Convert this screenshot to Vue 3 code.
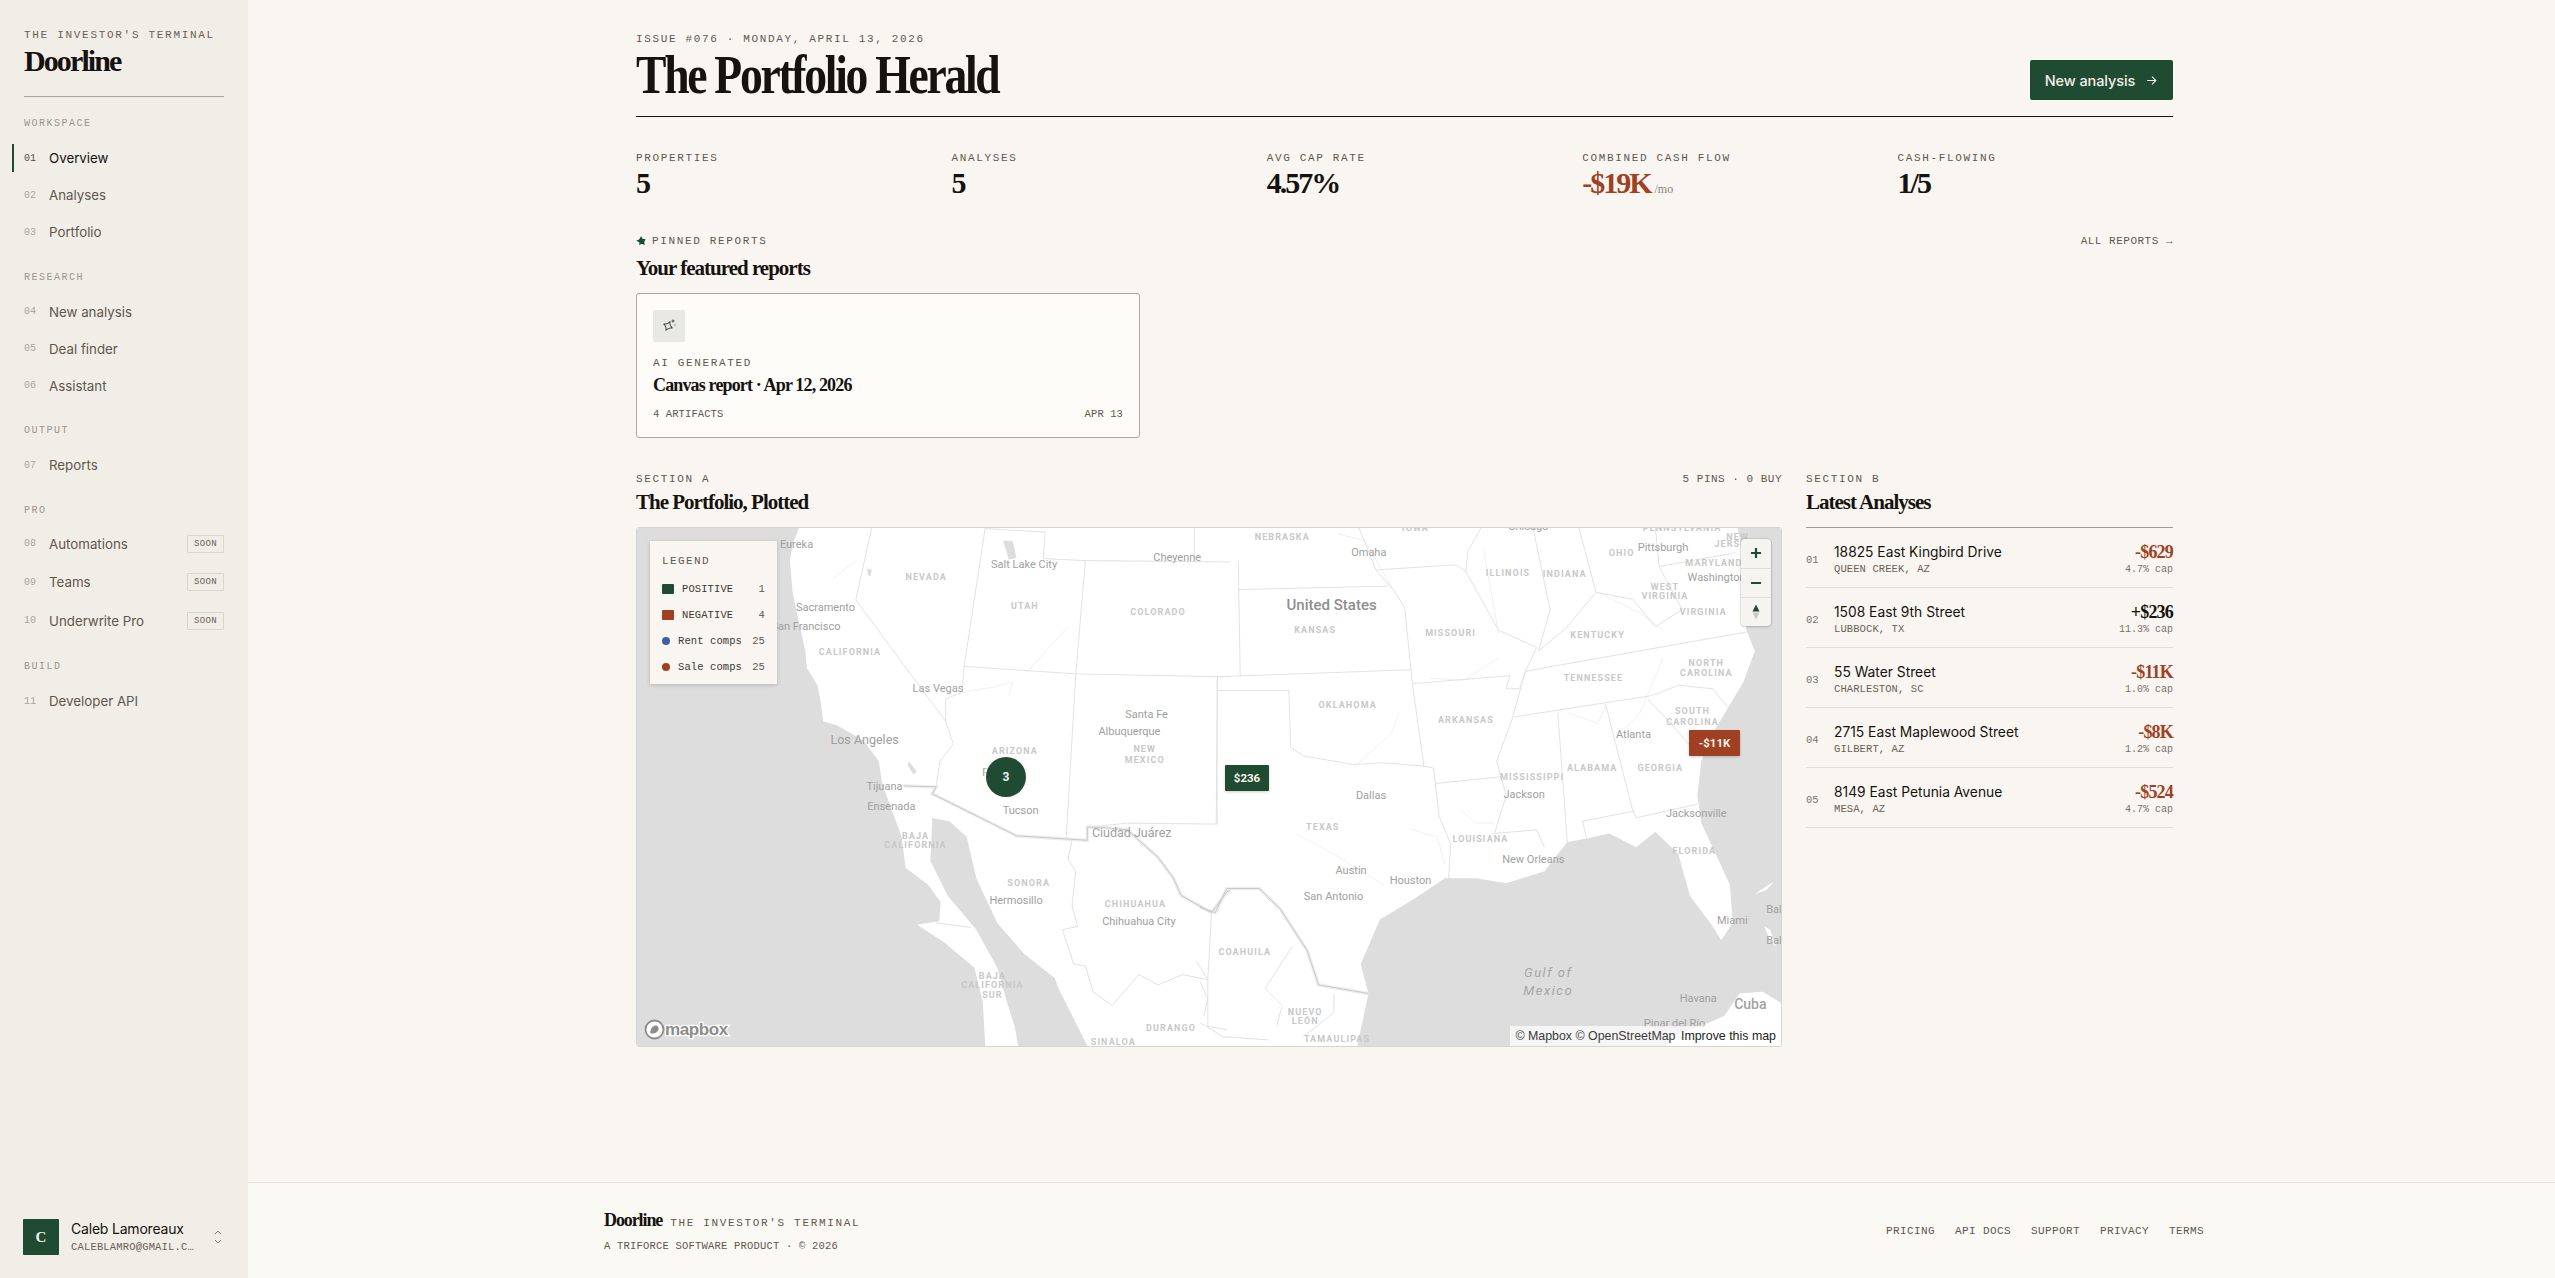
<template>
  <div class="app-shell">
    <!-- Sidebar -->
    <aside class="sidebar">
      <div class="brand">
        <div class="brand-tag">THE INVESTOR'S TERMINAL</div>
        <div class="brand-name">Doorline</div>
      </div>

      <nav>
        <div v-for="group in navGroups" :key="group.title" class="nav-group">
          <div class="nav-title">{{ group.title }}</div>
          <div
            v-for="item in group.items"
            :key="item.num"
            class="nav-row"
            :class="{ active: item.active, 'has-badge': item.soon }"
          >
            <span class="nav-num">{{ item.num }}</span>
            <span class="nav-label">{{ item.label }}</span>
            <span v-if="item.soon" class="soon">SOON</span>
          </div>
        </div>
      </nav>

      <div class="user">
        <div class="avatar">C</div>
        <div class="user-info">
          <div class="user-name">Caleb Lamoreaux</div>
          <div class="user-mail">CALEBLAMRO@GMAIL.C…</div>
        </div>
        <svg class="chevrons" width="12" height="16" viewBox="0 0 12 16" fill="none" stroke="#77716a" stroke-width="1">
          <path d="M3 5l3-3 3 3M3 11l3 3 3-3" />
        </svg>
      </div>
    </aside>

    <div class="main-col">
      <main class="main">
        <div class="content">
          <!-- Masthead -->
          <header class="masthead">
            <div>
              <div class="label">ISSUE #076 · MONDAY, APRIL 13, 2026</div>
              <h1>The Portfolio Herald</h1>
            </div>
            <button class="new-btn">
              New analysis
              <svg width="13" height="13" viewBox="0 0 24 24" fill="none" stroke="#f3efe6" stroke-width="2">
                <path d="M4 12h16M13 5l7 7-7 7" />
              </svg>
            </button>
          </header>

          <!-- Stats -->
          <section class="stats">
            <div v-for="stat in stats" :key="stat.label">
              <div class="label">{{ stat.label }}</div>
              <div class="stat-value" :class="{ neg: stat.neg }">
                {{ stat.value }}<span v-if="stat.unit" class="stat-unit">/mo</span>
              </div>
            </div>
          </section>

          <!-- Pinned reports -->
          <section class="pinned">
            <div class="section-head">
              <div>
                <div class="label pin-label">
                  <svg width="10" height="10" viewBox="0 0 10 10">
                    <path d="M5 .3l1.500 2.400 3.200.6-1.400 2.500.3 3.300-3.100-1.400-2.200 1.500.1-2.800L.3 4.400l2.800-1z" fill="#204b33" />
                  </svg>
                  PINNED REPORTS
                </div>
                <h2>Your featured reports</h2>
              </div>
              <div class="all-link">ALL REPORTS →</div>
            </div>
            <div class="report-card">
              <div class="report-icon">
                <svg width="16" height="16" viewBox="0 0 16 16" fill="none" stroke="#4c4a45" stroke-width="1">
                  <path d="M7 3Q7.900 7.100 12 8 7.900 8.900 7 13 6.100 8.900 2 8 6.100 7.100 7 3Z" transform="rotate(25 7 8)" />
                  <path d="M12 1.500v3M10.500 3h3" />
                  <path d="M14 6.500v1" />
                </svg>
              </div>
              <div class="label report-kind">AI GENERATED</div>
              <div class="report-title">Canvas report · Apr 12, 2026</div>
              <div class="report-foot">
                <span>4 ARTIFACTS</span>
                <span>APR 13</span>
              </div>
            </div>
          </section>

          <section class="split">
            <!-- Map -->
            <div>
              <div class="section-head">
                <div>
                  <div class="label">SECTION A</div>
                  <h2>The Portfolio, Plotted</h2>
                </div>
                <div class="pins-note">5 PINS · 0 BUY</div>
              </div>
              <div class="map">
                <svg class="map-canvas" viewBox="0 0 1146 519" width="1146" height="519">
                  <rect width="1146" height="519" fill="#fff" />
                  <path v-for="(d, i) in water" :key="'w' + i" :d="d" fill="#dddddd" />
                  <path v-for="(d, i) in islands" :key="'is' + i" :d="d" fill="#fff" />
                  <path v-for="(d, i) in faintLines" :key="'f' + i" :d="d" fill="none" stroke="#f0f0f0" stroke-width="1" />
                  <path v-for="(d, i) in stateLines" :key="'s' + i" :d="d" fill="none" stroke="#e2e2e2" stroke-width="1" />
                  <path v-for="(d, i) in border" :key="'ba' + i" :d="d" fill="none" stroke="#eeeeee" stroke-width="3.5" />
                  <path v-for="(d, i) in border" :key="'bb' + i" :d="d" fill="none" stroke="#c8c8c8" stroke-width="1" />
                  <text
                    v-for="(l, i) in mapLabels"
                    :key="'l' + i"
                    :x="l.x"
                    :y="l.y"
                    :class="'ml-' + l.kind"
                    text-anchor="middle"
                    dominant-baseline="central"
                  >{{ l.text }}</text>
                </svg>

                <div class="legend">
                  <div class="legend-title">LEGEND</div>
                  <div v-for="row in legend" :key="row.label" class="legend-row" :class="{ upper: row.square }">
                    <span :class="row.square ? 'swatch' : 'dot'" :style="{ background: row.color }"></span>
                    <span class="legend-label">{{ row.label }}</span>
                    <span class="legend-count">{{ row.count }}</span>
                  </div>
                </div>

                <div class="cluster">3</div>
                <div class="price pos">$236</div>
                <div class="price neg">-$11K</div>

                <div class="zoom-ctrl">
                  <button>
                    <svg width="14" height="14" viewBox="0 0 14 14"><path d="M7 2v10M2 7h10" stroke="#204b33" stroke-width="2.2" /></svg>
                  </button>
                  <button>
                    <svg width="14" height="14" viewBox="0 0 14 14"><path d="M2 7h10" stroke="#204b33" stroke-width="2.2" /></svg>
                  </button>
                  <button>
                    <svg width="14" height="18" viewBox="0 0 14 18">
                      <path d="M7 1.500l3.500 7h-7z" fill="#204b33" />
                      <path d="M7 16.500l3.500-7h-7z" fill="#c9c9c5" />
                    </svg>
                  </button>
                </div>

                <div class="mapbox-logo">
                  <svg width="21" height="21" viewBox="0 0 21 21">
                    <circle cx="10.5" cy="10.5" r="9" fill="#fff" stroke="#8c8c8c" stroke-width="1.8" />
                    <path d="M6.500 14.500c-.5-4 1.500-7.500 5-8 2.500 0 3.500 2 3 4-.5 2.500-3.500 4.500-8 4z" fill="#8c8c8c" />
                  </svg>
                  <svg width="66" height="21" viewBox="0 0 66 21">
                    <text x="0" y="16" class="mapbox-word">mapbox</text>
                  </svg>
                </div>
                <div class="attribution">
                  © Mapbox © OpenStreetMap <strong>Improve this map</strong>
                </div>
              </div>
            </div>

            <!-- Latest analyses -->
            <div>
              <div class="label">SECTION B</div>
              <h2>Latest Analyses</h2>
              <div class="analyses">
                <div v-for="row in analyses" :key="row.num" class="analysis">
                  <span class="analysis-num">{{ row.num }}</span>
                  <div class="analysis-main">
                    <div class="analysis-name">{{ row.name }}</div>
                    <div class="analysis-city">{{ row.city }}</div>
                  </div>
                  <div class="analysis-side">
                    <div class="analysis-value" :class="{ neg: row.neg }">{{ row.value }}</div>
                    <div class="analysis-cap">{{ row.cap }}</div>
                  </div>
                </div>
              </div>
            </div>
          </section>
        </div>
      </main>

      <!-- Footer -->
      <footer class="footer">
        <div class="footer-inner">
          <div>
            <div class="footer-brand">
              <span class="footer-name">Doorline</span>
              <span class="footer-tag">THE INVESTOR'S TERMINAL</span>
            </div>
            <div class="footer-sub">A TRIFORCE SOFTWARE PRODUCT · © 2026</div>
          </div>
          <div class="footer-links">
            <span v-for="link in footerLinks" :key="link">{{ link }}</span>
          </div>
        </div>
      </footer>
    </div>
  </div>
</template>

<script setup>
const navGroups = [
  { title: 'WORKSPACE', items: [
    { num: '01', label: 'Overview', active: true },
    { num: '02', label: 'Analyses' },
    { num: '03', label: 'Portfolio' },
  ] },
  { title: 'RESEARCH', items: [
    { num: '04', label: 'New analysis' },
    { num: '05', label: 'Deal finder' },
    { num: '06', label: 'Assistant' },
  ] },
  { title: 'OUTPUT', items: [{ num: '07', label: 'Reports' }] },
  { title: 'PRO', items: [
    { num: '08', label: 'Automations', soon: true },
    { num: '09', label: 'Teams', soon: true },
    { num: '10', label: 'Underwrite Pro', soon: true },
  ] },
  { title: 'BUILD', items: [{ num: '11', label: 'Developer API' }] },
];

const stats = [
  { label: 'PROPERTIES', value: '5' },
  { label: 'ANALYSES', value: '5' },
  { label: 'AVG CAP RATE', value: '4.57%' },
  { label: 'COMBINED CASH FLOW', value: '-$19K', neg: true, unit: true },
  { label: 'CASH-FLOWING', value: '1/5' },
];

const legend = [
  { label: 'POSITIVE', count: 1, color: '#204b33', square: true },
  { label: 'NEGATIVE', count: 4, color: '#9f4023', square: true },
  { label: 'Rent comps', count: 25, color: '#3f5fa3' },
  { label: 'Sale comps', count: 25, color: '#9f4023' },
];

const analyses = [
  { num: '01', name: '18825 East Kingbird Drive', city: 'QUEEN CREEK, AZ', value: '-$629', cap: '4.7% cap', neg: true },
  { num: '02', name: '1508 East 9th Street', city: 'LUBBOCK, TX', value: '+$236', cap: '11.3% cap' },
  { num: '03', name: '55 Water Street', city: 'CHARLESTON, SC', value: '-$11K', cap: '1.0% cap', neg: true },
  { num: '04', name: '2715 East Maplewood Street', city: 'GILBERT, AZ', value: '-$8K', cap: '1.2% cap', neg: true },
  { num: '05', name: '8149 East Petunia Avenue', city: 'MESA, AZ', value: '-$524', cap: '4.7% cap', neg: true },
];

const footerLinks = ['PRICING', 'API DOCS', 'SUPPORT', 'PRIVACY', 'TERMS'];

// Map drawing: points were read off two reference crops, left one starts at x=630, right one at x=1200
const SX = 1568 / 600;
const SY = 1568 / 540;
const toX = (side, x) => +((side === 'L' ? 630 : 1200) + x / SX - 636).toFixed(1);
const toY = (y) => +(520 + y / SY - 527).toFixed(1);

const line = (side, pts, close) => {
  let d = '';
  for (let i = 0; i < pts.length; i += 2) {
    d += (i ? 'L' : 'M') + toX(side, pts[i]) + ' ' + toY(pts[i + 1]);
  }
  return close ? d + 'Z' : d;
};

const water = [
  line('L', [-20, 0, 450, 0, 425, 70, 418, 120, 425, 210, 442, 300, 458, 380, 462, 430, 490, 480, 497, 520, 505, 585, 540, 595, 610, 640, 650, 700, 660, 770, 680, 830, 710, 920, 720, 1010, 780, 1060, 812, 1110, 808, 1165, 750, 1175, 820, 1225, 900, 1300, 922, 1400, 930, 1560, -20, 1560], true),
  line('L', [790, 865, 835, 875, 880, 920, 905, 1040, 960, 1170, 1030, 1260, 1110, 1330, 1120, 1360, 1210, 1560, 1020, 1560, 1005, 1470, 985, 1400, 960, 1300, 905, 1190, 830, 1090, 785, 990], true),
  line('R', [1400, 0, 1420, 100, 1420, 200, 1428, 320, 1450, 380, 1420, 470, 1380, 545, 1345, 610, 1310, 700, 1300, 800, 1310, 880, 1385, 1060, 1392, 1170, 1362, 1220, 1340, 1180, 1280, 1090, 1250, 970, 1190, 905, 1140, 950, 1070, 910, 1010, 925, 960, 935, 900, 1020, 800, 1055, 720, 1040, 640, 1040, 560, 1100, 470, 1160, 420, 1290, 440, 1375, 405, 1560, 1600, 1560, 1600, 0], true),
  line('L', [975, 60, 1000, 60, 1010, 110, 990, 115], true),
  line('L', [620, 140, 632, 145, 628, 165, 622, 160], true),
  line('L', [728, 700, 750, 730, 740, 738, 726, 712], true),
];

const islands = [
  line('R', [1190, 1560, 1250, 1490, 1330, 1460, 1370, 1440, 1410, 1375, 1470, 1370, 1530, 1410, 1530, 1560], true),
  line('R', [1475, 1180, 1490, 1220, 1505, 1240, 1490, 1190], true),
  line('R', [1450, 1085, 1500, 1050, 1480, 1075], true),
];

const stateLines = [
  line('L', [632, 22, 590, 232, 825, 585, 845, 650, 810, 700, 800, 775]),
  line('L', [928, 25, 873, 425, 868, 500, 825, 520, 825, 585]),
  line('L', [873, 425, 1165, 447, 1535, 455, 1568, 455]),
  line('L', [928, 25, 1085, 35, 1080, 112, 1190, 118, 1165, 447, 1140, 925]),
  line('L', [1190, 118, 1568, 122]),
  line('L', [1475, 22, 1475, 120]),
  line('L', [1535, 455, 1532, 883, 1300, 880, 1195, 892]),
  line('L', [1155, 930, 1145, 985, 1165, 1020, 1155, 1120, 1170, 1180, 1130, 1190, 1160, 1290, 1190, 1295, 1210, 1370, 1260, 1410, 1330, 1320, 1380, 1350, 1445, 1320, 1510, 1335, 1520, 1140]),
  line('L', [800, 1170, 890, 1183]),
  line('L', [1480, 1280, 1510, 1335, 1510, 1470, 1560, 1480]),
  line('R', [100, 120, 105, 452]),
  line('R', [100, 202, 490, 192]),
  line('R', [45, 455, 550, 435]),
  line('R', [45, 455, 45, 885]),
  line('R', [45, 495, 232, 495, 237, 660, 270, 685, 400, 710, 480, 705, 585, 715, 610, 720, 625, 860, 655, 940, 650, 1040]),
  line('R', [415, 22, 460, 145, 510, 210, 535, 255, 555, 475, 585, 715]),
  line('R', [555, 475, 810, 452, 800, 490, 835, 490, 850, 440]),
  line('R', [850, 440, 920, 425, 1430, 325]),
  line('R', [615, 765, 790, 745]),
  line('R', [850, 440, 815, 580, 775, 700, 800, 800, 770, 910, 880, 900, 900, 950]),
  line('R', [820, 572, 1180, 510, 1250, 480, 1340, 490, 1380, 545]),
  line('R', [935, 560, 960, 935]),
  line('R', [1060, 535, 1130, 840, 1140, 865, 1300, 825]),
  line('R', [1000, 875, 1135, 845]),
  line('R', [1000, 875, 1010, 925]),
  line('R', [1170, 520, 1230, 590, 1300, 680]),
  line('R', [460, 145, 670, 130, 695, 150, 700, 90, 735, 22]),
  line('R', [695, 150, 780, 320, 880, 370, 850, 440]),
  line('R', [870, 22, 915, 260, 885, 380]),
  line('R', [990, 22, 1035, 210]),
  line('R', [885, 380, 960, 310, 1035, 210, 1130, 230, 1190, 310, 1260, 260, 1200, 135]),
  line('R', [1190, 22, 1200, 135, 1400, 95]),
  line('R', [0, 1460, 60, 1500, 180, 1510]),
  line('R', [0, 1340, 20, 1390, 10, 1440]),
  line('R', [240, 1240, 170, 1360, 215, 1410, 200, 1470]),
  line('R', [350, 1375, 350, 1430, 270, 1500]),
];

const faintLines = [
  line('L', [1040, 440, 1095, 370, 1145, 310]),
  line('L', [870, 500, 950, 485, 1000, 470, 990, 510]),
  line('L', [530, 170, 590, 120]),
  line('R', [600, 460, 690, 465, 780, 400]),
  line('R', [680, 840, 720, 880, 770, 880]),
  line('R', [555, 900, 620, 920, 640, 1000]),
  line('R', [250, 910, 350, 970, 480, 1060]),
  line('R', [400, 720, 500, 620, 520, 560]),
  line('R', [1080, 640, 1150, 560, 1210, 400]),
  line('R', [960, 560, 1040, 590, 1060, 540]),
  line('R', [740, 80, 780, 330]),
  line('R', [1040, 210, 1150, 270, 1210, 320]),
  line('R', [360, 40, 430, 60, 520, 230]),
];

// Mexico / US border is drawn with a soft halo, as the map style does
const border = [
  line('L', [715, 772, 800, 775, 790, 795, 1010, 917, 1195, 930, 1195, 892, 1230, 892, 1300, 900, 1380, 980, 1420, 1040, 1440, 1090, 1520, 1140, 1560, 1080, 1568, 1075]),
  line('R', [0, 1125, 40, 1140, 70, 1070, 155, 1070, 210, 1130, 280, 1250, 310, 1350, 440, 1375]),
];

const labelRows = [
  ['L', 'Eureka', 435, 70, 'c'], ['L', 'NEVADA', 774, 165, 's'], ['L', 'Salt Lake City', 1030, 128, 'c'],
  ['L', 'Cheyenne', 1430, 110, 'c'], ['L', 'UTAH', 1032, 250, 's'], ['L', 'COLORADO', 1380, 268, 's'],
  ['L', 'Sacramento', 511, 254, 'c'], ['L', 'San Francisco', 460, 308, 'c'], ['L', 'CALIFORNIA', 575, 383, 's'],
  ['L', 'Las Vegas', 805, 488, 'c'], ['L', 'Santa Fe', 1350, 564, 'c'], ['L', 'Albuquerque', 1305, 614, 'c'],
  ['L', 'NEW', 1345, 665, 's'], ['L', 'MEXICO', 1345, 696, 's'], ['L', 'ARIZONA', 1006, 670, 's'],
  ['L', 'Los Angeles', 613, 638, 'b'], ['L', 'Phoenix', 972, 733, 'c'], ['L', 'Tijuana', 665, 773, 'c'],
  ['L', 'Ensenada', 683, 832, 'c'], ['L', 'Tucson', 1021, 843, 'c'], ['L', 'Ciudad Juárez', 1311, 906, 'b'],
  ['L', 'BAJA', 746, 917, 's'], ['L', 'CALIFORNIA', 746, 945, 's'], ['L', 'SONORA', 1042, 1054, 's'],
  ['L', 'Hermosillo', 1009, 1106, 'c'], ['L', 'CHIHUAHUA', 1321, 1114, 's'], ['L', 'Chihuahua City', 1330, 1166, 'c'],
  ['L', 'BAJA', 947, 1323, 's'], ['L', 'CALIFORNIA', 947, 1351, 's'], ['L', 'SUR', 947, 1379, 's'],
  ['L', 'DURANGO', 1414, 1476, 's'], ['L', 'SINALOA', 1263, 1515, 's'],
  ['R', 'NEBRASKA', 215, 50, 's'], ['R', 'IOWA', 563, 22, 's'], ['R', 'Chicago', 858, 18, 'c'],
  ['R', 'PENNSYLVANIA', 1260, 22, 's'], ['R', 'NEW', 1405, 48, 's'], ['R', 'JERSEY', 1395, 70, 's'],
  ['R', 'Omaha', 441, 93, 'c'], ['R', 'OHIO', 1102, 97, 's'], ['R', 'Pittsburgh', 1210, 80, 'c'],
  ['R', 'MARYLAND', 1343, 124, 's'], ['R', 'ILLINOIS', 805, 155, 's'], ['R', 'INDIANA', 953, 157, 's'],
  ['R', 'Washington', 1350, 167, 'c'], ['R', 'WEST', 1215, 194, 's'], ['R', 'VIRGINIA', 1215, 220, 's'],
  ['R', 'United States', 344, 248, 'u'], ['R', 'VIRGINIA', 1315, 267, 's'], ['R', 'KANSAS', 301, 320, 's'],
  ['R', 'MISSOURI', 655, 327, 's'], ['R', 'KENTUCKY', 1039, 335, 's'], ['R', 'NORTH', 1323, 416, 's'],
  ['R', 'CAROLINA', 1323, 445, 's'], ['R', 'TENNESSEE', 1028, 460, 's'], ['R', 'OKLAHOMA', 386, 537, 's'],
  ['R', 'SOUTH', 1287, 555, 's'], ['R', 'CAROLINA', 1287, 585, 's'], ['R', 'ARKANSAS', 695, 581, 's'],
  ['R', 'Atlanta', 1133, 622, 'c'], ['R', 'ALABAMA', 1025, 720, 's'], ['R', 'GEORGIA', 1203, 720, 's'],
  ['R', 'MISSISSIPPI', 868, 746, 's'], ['R', 'Jackson', 847, 796, 'c'], ['R', 'Dallas', 447, 801, 'c'],
  ['R', 'TEXAS', 321, 892, 's'], ['R', 'Jacksonville', 1297, 853, 'c'], ['R', 'LOUISIANA', 733, 927, 's'],
  ['R', 'FLORIDA', 1292, 961, 's'], ['R', 'New Orleans', 871, 987, 'c'], ['R', 'Austin', 395, 1019, 'c'],
  ['R', 'Houston', 550, 1048, 'c'], ['R', 'San Antonio', 349, 1093, 'c'], ['R', 'COAHUILA', 117, 1253, 's'],
  ['R', 'Bal', 1500, 1130, 'c'], ['R', 'Miami', 1391, 1162, 'c'], ['R', 'Bal', 1500, 1222, 'c'],
  ['R', 'Gulf of', 910, 1314, 'g'], ['R', 'Mexico', 910, 1366, 'g'], ['R', 'Havana', 1302, 1388, 'c'],
  ['R', 'Cuba', 1438, 1404, 'k'], ['R', 'NUEVO', 275, 1428, 's'], ['R', 'LEÓN', 275, 1455, 's'],
  ['R', 'Pinar del Río', 1240, 1462, 'c'], ['R', 'TAMAULIPAS', 358, 1508, 's'],
];

const mapLabels = labelRows.map(([side, text, x, y, kind]) => ({ text, kind, x: toX(side, x), y: toY(y) }));
</script>

<style scoped>
  .app-shell {
    display: flex;
    min-height: 100vh;
    font-family: Inter, "Liberation Sans", sans-serif;
    color: #15120f;
    background: #f9f6f1;
  }

  /* Sidebar */
  .sidebar {
    width: 248px;
    flex: none;
    box-sizing: border-box;
    padding: 28px 24px 23px;
    background: #f1eee8;
    display: flex;
    flex-direction: column;
  }

  .brand {
    height: 68px;
    border-bottom: 1px solid #a8a49e;
    margin-bottom: 21px;
  }

  .brand-tag {
    font: 11px/14px "Liberation Mono", monospace;
    letter-spacing: 1.7px;
    color: #6a6056;
  }

  .brand-name {
    font: 700 30px/36px "Liberation Serif", serif;
    letter-spacing: -1.9px;
    margin-top: 1px;
  }

  .nav-group {
    margin-bottom: 21px;
  }

  .nav-title {
    font: 10px/12px "Liberation Mono", monospace;
    letter-spacing: 1.5px;
    color: #9b958a;
    margin-bottom: 9.5px;
  }

  .nav-row {
    position: relative;
    height: 37px;
    display: flex;
    align-items: center;
    font-size: 13.3px;
    color: #5f564e;
  }

  .nav-row.has-badge {
    height: 38.5px;
  }

  .nav-title + .has-badge {
    margin-top: -1.5px;
  }

  .nav-row.active {
    color: #15120f;
  }

  .nav-row.active::before {
    content: '';
    position: absolute;
    left: -12px;
    top: 4px;
    bottom: 5px;
    width: 2px;
    background: #204b33;
  }

  .nav-num {
    width: 25px;
    font: 10px "Liberation Mono", monospace;
    color: #aaa799;
  }

  .nav-row.active .nav-num {
    color: #4b534c;
  }

  .soon {
    margin-left: auto;
    box-sizing: border-box;
    width: 37px;
    height: 18px;
    border: 1px solid #dad7d1;
    border-radius: 1px;
    text-align: center;
    font: 9px/16px "Liberation Mono", monospace;
    letter-spacing: .4px;
    color: #6a6259;
  }

  .user {
    margin-top: auto;
    margin-left: -1px;
    display: flex;
    align-items: center;
  }

  .avatar {
    width: 36px;
    height: 36px;
    border-radius: 1px;
    background: #204b33;
    color: #f3efe6;
    font: 700 15px/36px "Liberation Serif", serif;
    text-align: center;
    flex: none;
  }

  .user-info {
    margin-left: 12px;
    width: 135px;
    overflow: hidden;
  }

  .user-name {
    font-size: 14px;
    line-height: 18px;
    letter-spacing: -.2px;
  }

  .user-mail {
    font: 10.5px/14px "Liberation Mono", monospace;
    letter-spacing: .17px;
    color: #6a6056;
    margin-top: 2px;
    white-space: nowrap;
  }

  .chevrons {
    margin-left: 8px;
  }

  /* Main column */
  .main-col {
    flex: 1;
    min-width: 0;
    display: flex;
    flex-direction: column;
  }

  .main {
    flex: 1;
    display: flex;
    justify-content: center;
    padding-left: 6px;
  }

  .content {
    width: 1537px;
    padding-top: 32px;
  }

  .label {
    font: 11px/14px "Liberation Mono", monospace;
    letter-spacing: 1.65px;
    color: #5f564e;
  }

  h1, h2 {
    margin: 0;
    font-family: "Liberation Serif", serif;
    font-weight: 700;
  }

  .masthead {
    box-sizing: border-box;
    display: flex;
    justify-content: space-between;
    align-items: flex-end;
    height: 85px;
    padding-bottom: 14px;
    border-bottom: 1px solid #15120f;
  }

  h1 {
    font-size: 54px;
    line-height: 54px;
    letter-spacing: -2.7px;
    margin-top: 2px;
    white-space: nowrap;
    transform: scaleX(.845);
    transform-origin: left;
  }

  .new-btn {
    width: 143px;
    height: 40px;
    margin-bottom: 2px;
    display: flex;
    align-items: center;
    justify-content: center;
    gap: 10px;
    border: 0;
    border-radius: 2px;
    background: #204b33;
    color: #f3efe6;
    font: 500 14.5px Inter, sans-serif;
    letter-spacing: -.1px;
  }

  .stats {
    display: grid;
    grid-template-columns: repeat(5, 1fr);
    gap: 40px;
    margin-top: 34px;
  }

  .stat-value {
    font: 700 30px/36px "Liberation Serif", serif;
    letter-spacing: -2px;
  }

  .stat-value.neg {
    color: #9f4023;
  }

  .stat-unit {
    font-size: 12px;
    font-weight: 400;
    letter-spacing: 0;
    color: #8a8378;
    margin-left: 4px;
  }

  .pinned {
    margin-top: 27px;
  }

  .section-head {
    display: flex;
    justify-content: space-between;
    align-items: flex-start;
  }

  .pin-label {
    display: flex;
    align-items: center;
    gap: 6px;
  }

  h2 {
    font-size: 21px;
    line-height: 26px;
    letter-spacing: -1px;
    margin-top: 3px;
  }

  .pinned h2 {
    margin-top: 6.5px;
  }

  .all-link, .pins-note {
    font: 11px/14px "Liberation Mono", monospace;
    letter-spacing: .5px;
    color: #5f564e;
  }

  .report-card {
    box-sizing: border-box;
    width: 504px;
    height: 145px;
    margin-top: 12.5px;
    padding: 16px;
    background: #fdfcf9;
    border: 1px solid #aaa8a2;
    border-radius: 3px;
  }

  .report-icon {
    width: 32px;
    height: 32px;
    border-radius: 2px;
    background: #e8e8e5;
    display: flex;
    align-items: center;
    justify-content: center;
  }

  .report-kind {
    margin-top: 13.5px;
  }

  .report-title {
    font: 700 18px/24px "Liberation Serif", serif;
    letter-spacing: -.85px;
    margin-top: 3px;
  }

  .report-foot {
    display: flex;
    justify-content: space-between;
    margin-top: 10.5px;
    font: 10.5px/14px "Liberation Mono", monospace;
    letter-spacing: .1px;
    color: #5f564e;
  }

  .split {
    display: grid;
    grid-template-columns: 1146px 1fr;
    gap: 24px;
    margin-top: 34px;
  }

  .map {
    position: relative;
    box-sizing: border-box;
    height: 520px;
    margin-top: 11.5px;
    border: 1px solid #d8d5cf;
    border-radius: 3px;
    overflow: hidden;
  }

  .map-canvas {
    display: block;
    margin: -1px 0 0 -1px;
  }

  .ml-c, .ml-b {
    font: 400 11px Roboto, sans-serif;
    fill: #a0a0a0;
  }

  .ml-b {
    font-size: 12.5px;
  }

  .ml-s {
    font: 700 9px Roboto, sans-serif;
    letter-spacing: 1.1px;
    fill: #c8c8c8;
  }

  .ml-u {
    font: 500 15px Roboto, sans-serif;
    fill: #8e8e8e;
  }

  .ml-k {
    font: 500 14px Roboto, sans-serif;
    fill: #a3a3a3;
  }

  .ml-g {
    font: italic 400 13px Roboto, sans-serif;
    letter-spacing: 1.5px;
    fill: #a6a6a6;
  }

  .legend {
    position: absolute;
    left: 13px;
    top: 13px;
    box-sizing: border-box;
    width: 127px;
    height: 143px;
    padding: 13.5px 12px 0;
    background: #f9f6f1;
    box-shadow: 0 1px 4px rgba(0, 0, 0, .18);
    font: 10.5px/14px "Liberation Mono", monospace;
    color: #3c3833;
  }

  .legend-title {
    font-size: 11px;
    letter-spacing: 1.4px;
    color: #5f564e;
    margin-bottom: 7.5px;
  }

  .legend-row {
    height: 26px;
    display: flex;
    align-items: center;
    letter-spacing: .1px;
  }

  .swatch {
    width: 12px;
    height: 10px;
    border-radius: 1px;
    margin-right: 8px;
  }

  .dot {
    width: 8px;
    height: 8px;
    border-radius: 50%;
    margin-right: 8px;
  }

  .legend-count {
    margin-left: auto;
    color: #5f564e;
  }

  .cluster {
    position: absolute;
    left: 349px;
    top: 229px;
    width: 40px;
    height: 40px;
    border-radius: 50%;
    background: #204b33;
    box-shadow: 0 0 0 2px rgba(249, 246, 241, .7);
    color: #f3efe6;
    font: 700 12px/40px Roboto, sans-serif;
    text-align: center;
  }

  .price {
    position: absolute;
    height: 26px;
    border-radius: 1px;
    color: #f7f3ea;
    font: 700 11.5px/26px Roboto, sans-serif;
    text-align: center;
    box-shadow: 0 1px 3px rgba(0, 0, 0, .2);
  }

  .price.pos {
    left: 588px;
    top: 237px;
    width: 44px;
    background: #204b33;
  }

  .price.neg {
    left: 1052px;
    top: 202px;
    width: 51px;
    background: #9f4023;
  }

  .zoom-ctrl {
    position: absolute;
    left: 1104px;
    top: 11px;
    width: 30px;
    border-radius: 4px;
    background: #f5f4f0;
    box-shadow: 0 0 0 1px rgba(0, 0, 0, .08), 0 1px 3px rgba(0, 0, 0, .15);
    display: flex;
    flex-direction: column;
  }

  .zoom-ctrl button {
    height: 29px;
    padding: 0;
    border: 0;
    border-top: 1px solid #ddd;
    background: none;
    display: flex;
    align-items: center;
    justify-content: center;
  }

  .zoom-ctrl button:first-child {
    border-top: 0;
  }

  .mapbox-logo {
    position: absolute;
    left: 7px;
    bottom: 6px;
    display: flex;
    align-items: center;
  }

  .mapbox-word {
    font: 700 17px "Liberation Sans", sans-serif;
    letter-spacing: -.4px;
    fill: #8c8c8c;
    stroke: #fff;
    stroke-width: 2.5px;
    paint-order: stroke;
  }

  .attribution {
    position: absolute;
    right: 0;
    bottom: 0;
    box-sizing: border-box;
    height: 20px;
    padding: 0 5px;
    background: rgba(255, 255, 255, .7);
    font: 12.4px/20px "Liberation Sans", sans-serif;
    color: #3b3b3b;
    white-space: nowrap;
  }

  .attribution strong {
    font-weight: 400;
    color: #222;
    margin-left: 2px;
  }

  .analyses {
    margin-top: 11.5px;
    border-top: 1px solid #a09a94;
  }

  .analysis {
    box-sizing: border-box;
    height: 60px;
    padding-top: 5px;
    display: flex;
    align-items: center;
    border-bottom: 1px solid #e2dfd8;
  }

  .analysis-num {
    width: 28px;
    font: 10.5px "Liberation Mono", monospace;
    color: #77746a;
  }

  .analysis-main {
    flex: 1;
  }

  .analysis-name {
    font-size: 13.8px;
    line-height: 18px;
  }

  .analysis-city {
    font: 10.5px/14px "Liberation Mono", monospace;
    letter-spacing: .1px;
    color: #6a6056;
    margin-top: 1px;
  }

  .analysis-side {
    text-align: right;
  }

  .analysis-value {
    font: 700 18px/20px "Liberation Serif", serif;
    letter-spacing: -.8px;
  }

  .analysis-value.neg {
    color: #9f4023;
  }

  .analysis-cap {
    font: 10px/14px "Liberation Mono", monospace;
    color: #77716a;
    margin-top: 1px;
  }

  /* Footer */
  .footer {
    height: 96px;
    box-sizing: border-box;
    border-top: 1px solid #e6e3dc;
    background: #fbf9f4;
    display: flex;
    justify-content: center;
    padding-left: 5px;
  }

  .footer-inner {
    width: 1600px;
    display: flex;
    justify-content: space-between;
    align-items: center;
  }

  .footer-brand {
    display: flex;
    align-items: baseline;
    gap: 8px;
  }

  .footer-name {
    font: 700 18px/22px "Liberation Serif", serif;
    letter-spacing: -1.1px;
  }

  .footer-tag {
    font: 11px "Liberation Mono", monospace;
    letter-spacing: 1.66px;
    color: #5f564e;
  }

  .footer-sub {
    font: 10.5px/14px "Liberation Mono", monospace;
    letter-spacing: .2px;
    color: #5f564e;
    margin-top: 8px;
  }

  .footer-links {
    display: flex;
    gap: 20px;
    font: 11px "Liberation Mono", monospace;
    letter-spacing: .4px;
    color: #5f564e;
  }
</style>
